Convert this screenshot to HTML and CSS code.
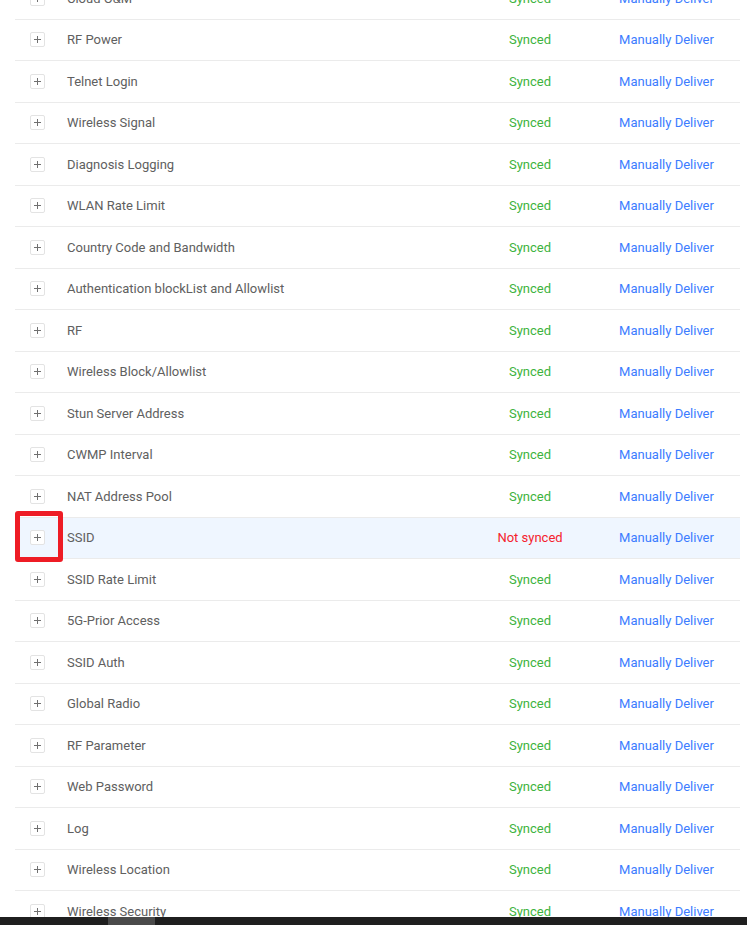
FILE: index.html
```html
<!DOCTYPE html>
<html lang="en">
<head>
    <meta charset="UTF-8">
    <meta name="viewport" content="width=device-width, initial-scale=1.0">
    <title>Config Sync</title>
    <link rel="stylesheet" href="styles.css">
</head>
<body>

    <div class="sync-table">
        <div class="row"><div class="cell-expand"><span class="expand-icon"></span></div><div class="cell-name">Cloud O&amp;M</div><div class="cell-status synced">Synced</div><div class="cell-action"><a href="#">Manually Deliver</a></div></div>
        <div class="row"><div class="cell-expand"><span class="expand-icon"></span></div><div class="cell-name">RF Power</div><div class="cell-status synced">Synced</div><div class="cell-action"><a href="#">Manually Deliver</a></div></div>
        <div class="row"><div class="cell-expand"><span class="expand-icon"></span></div><div class="cell-name">Telnet Login</div><div class="cell-status synced">Synced</div><div class="cell-action"><a href="#">Manually Deliver</a></div></div>
        <div class="row"><div class="cell-expand"><span class="expand-icon"></span></div><div class="cell-name">Wireless Signal</div><div class="cell-status synced">Synced</div><div class="cell-action"><a href="#">Manually Deliver</a></div></div>
        <div class="row"><div class="cell-expand"><span class="expand-icon"></span></div><div class="cell-name">Diagnosis Logging</div><div class="cell-status synced">Synced</div><div class="cell-action"><a href="#">Manually Deliver</a></div></div>
        <div class="row"><div class="cell-expand"><span class="expand-icon"></span></div><div class="cell-name">WLAN Rate Limit</div><div class="cell-status synced">Synced</div><div class="cell-action"><a href="#">Manually Deliver</a></div></div>
        <div class="row"><div class="cell-expand"><span class="expand-icon"></span></div><div class="cell-name">Country Code and Bandwidth</div><div class="cell-status synced">Synced</div><div class="cell-action"><a href="#">Manually Deliver</a></div></div>
        <div class="row"><div class="cell-expand"><span class="expand-icon"></span></div><div class="cell-name">Authentication blockList and Allowlist</div><div class="cell-status synced">Synced</div><div class="cell-action"><a href="#">Manually Deliver</a></div></div>
        <div class="row"><div class="cell-expand"><span class="expand-icon"></span></div><div class="cell-name">RF</div><div class="cell-status synced">Synced</div><div class="cell-action"><a href="#">Manually Deliver</a></div></div>
        <div class="row"><div class="cell-expand"><span class="expand-icon"></span></div><div class="cell-name">Wireless Block/Allowlist</div><div class="cell-status synced">Synced</div><div class="cell-action"><a href="#">Manually Deliver</a></div></div>
        <div class="row"><div class="cell-expand"><span class="expand-icon"></span></div><div class="cell-name">Stun Server Address</div><div class="cell-status synced">Synced</div><div class="cell-action"><a href="#">Manually Deliver</a></div></div>
        <div class="row"><div class="cell-expand"><span class="expand-icon"></span></div><div class="cell-name">CWMP Interval</div><div class="cell-status synced">Synced</div><div class="cell-action"><a href="#">Manually Deliver</a></div></div>
        <div class="row"><div class="cell-expand"><span class="expand-icon"></span></div><div class="cell-name">NAT Address Pool</div><div class="cell-status synced">Synced</div><div class="cell-action"><a href="#">Manually Deliver</a></div></div>
        <!-- the row marked in the screenshot -->
        <div class="row row-active"><div class="cell-expand"><span class="expand-icon"></span><span class="marker"></span></div><div class="cell-name">SSID</div><div class="cell-status not-synced">Not synced</div><div class="cell-action"><a href="#">Manually Deliver</a></div></div>
        <div class="row"><div class="cell-expand"><span class="expand-icon"></span></div><div class="cell-name">SSID Rate Limit</div><div class="cell-status synced">Synced</div><div class="cell-action"><a href="#">Manually Deliver</a></div></div>
        <div class="row"><div class="cell-expand"><span class="expand-icon"></span></div><div class="cell-name">5G-Prior Access</div><div class="cell-status synced">Synced</div><div class="cell-action"><a href="#">Manually Deliver</a></div></div>
        <div class="row"><div class="cell-expand"><span class="expand-icon"></span></div><div class="cell-name">SSID Auth</div><div class="cell-status synced">Synced</div><div class="cell-action"><a href="#">Manually Deliver</a></div></div>
        <div class="row"><div class="cell-expand"><span class="expand-icon"></span></div><div class="cell-name">Global Radio</div><div class="cell-status synced">Synced</div><div class="cell-action"><a href="#">Manually Deliver</a></div></div>
        <div class="row"><div class="cell-expand"><span class="expand-icon"></span></div><div class="cell-name">RF Parameter</div><div class="cell-status synced">Synced</div><div class="cell-action"><a href="#">Manually Deliver</a></div></div>
        <div class="row"><div class="cell-expand"><span class="expand-icon"></span></div><div class="cell-name">Web Password</div><div class="cell-status synced">Synced</div><div class="cell-action"><a href="#">Manually Deliver</a></div></div>
        <div class="row"><div class="cell-expand"><span class="expand-icon"></span></div><div class="cell-name">Log</div><div class="cell-status synced">Synced</div><div class="cell-action"><a href="#">Manually Deliver</a></div></div>
        <div class="row"><div class="cell-expand"><span class="expand-icon"></span></div><div class="cell-name">Wireless Location</div><div class="cell-status synced">Synced</div><div class="cell-action"><a href="#">Manually Deliver</a></div></div>
        <div class="row"><div class="cell-expand"><span class="expand-icon"></span></div><div class="cell-name">Wireless Security</div><div class="cell-status synced">Synced</div><div class="cell-action"><a href="#">Manually Deliver</a></div></div>
        <div class="row"><div class="cell-expand"><span class="expand-icon"></span></div><div class="cell-name">Radio Settings</div><div class="cell-status synced">Synced</div><div class="cell-action"><a href="#">Manually Deliver</a></div></div>
    </div>

    <div class="bottom-bar"><span class="bottom-thumb"></span></div>

</body>
</html>
```

FILE: styles.css
```css
html, body {
    height: 100%;
    overflow: hidden;
}
body {
    font-family: Roboto, Arial, sans-serif;
    font-size: 13px;
    color: #606060;
    background-color: #fff;
    margin: 0;
    padding: 0 7px 0 15px;
}
.sync-table {
    margin-top: -22px; /* list is scrolled down a bit */
}
.row {
    display: grid;
    grid-template-columns: 52px 400px 126px 147px;
    align-items: center;
    height: 41.5px;
    box-sizing: border-box;
    border-bottom: 1px solid #ebebeb;
}
.row-active {
    background-color: #eff6ff;
}
.cell-expand {
    position: relative;
    height: 100%;
    display: flex;
    align-items: center;
    padding-left: 15px;
}
/* plus sign drawn with two thin lines */
.expand-icon {
    position: relative;
    width: 15px;
    height: 15px;
    box-sizing: border-box;
    border: 1px solid #e3e3e3;
    border-radius: 2px;
    background-color: #fff;
}
.expand-icon::before, .expand-icon::after {
    content: "";
    position: absolute;
    background-color: #707070;
}
.expand-icon::before {
    left: 3px;
    right: 3px;
    top: 6px;
    height: 1px;
}
.expand-icon::after {
    top: 3px;
    bottom: 3px;
    left: 6px;
    width: 1px;
}
.marker {
    position: absolute;
    left: 0;
    top: -7px;
    width: 48px;
    height: 51px;
    box-sizing: border-box;
    border: 5px solid #ee1c25;
    border-radius: 3px;
}
.cell-status {
    text-align: center;
}
.synced {
    color: #3db33d;
}
.not-synced {
    color: #f5222d;
}
.cell-action {
    text-align: center;
}
.cell-action a {
    color: #3c7cff;
    text-decoration: none;
}
.bottom-bar {
    position: fixed;
    left: 0;
    right: 0;
    bottom: 0;
    height: 8px;
    background-color: #1f1f1f;
}
.bottom-thumb {
    position: absolute;
    left: 108px;
    top: 0;
    width: 47px;
    height: 8px;
    background-color: #4a4a4a;
}
```
